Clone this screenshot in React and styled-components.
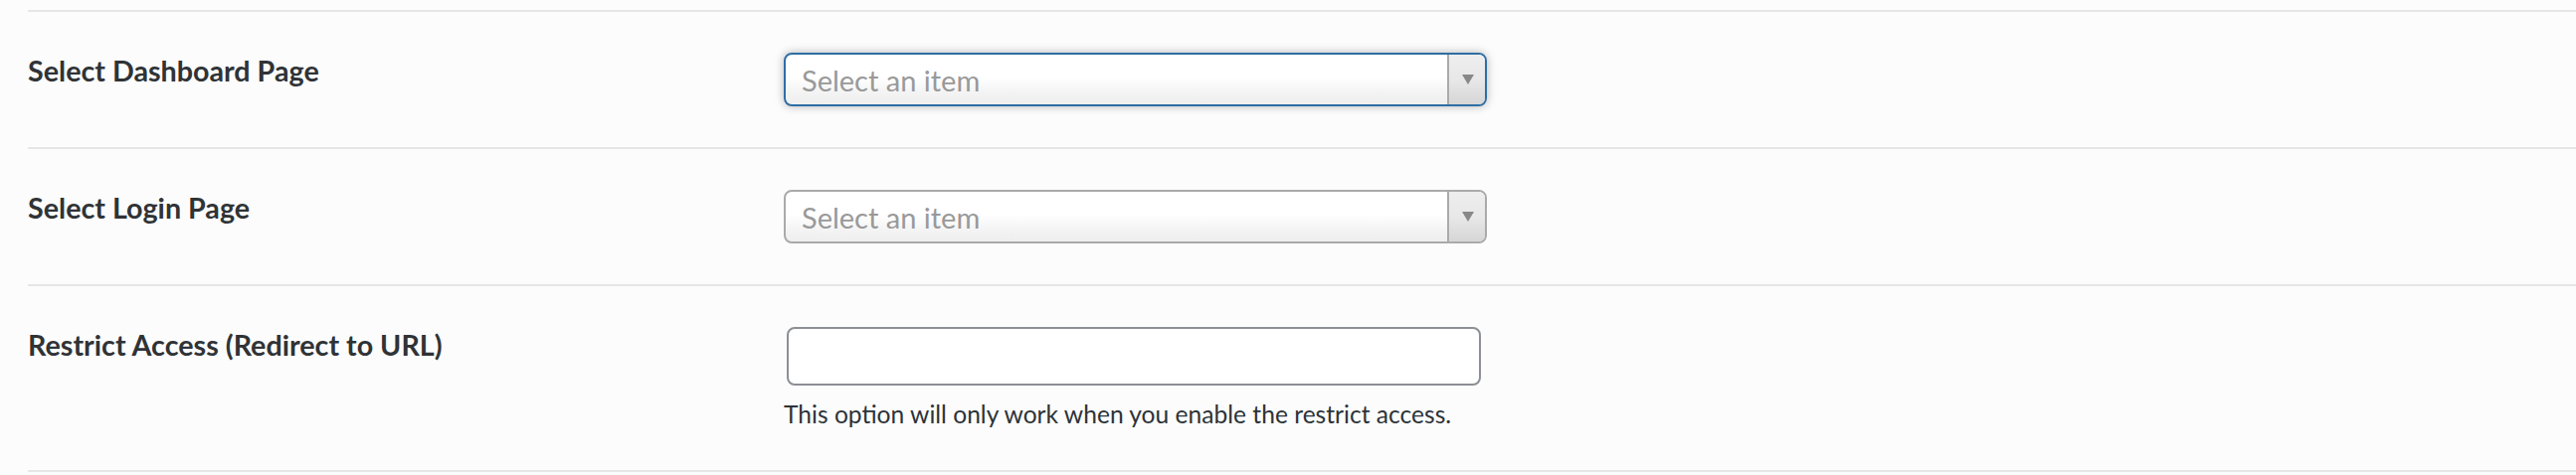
import React from "react";
import styled, { createGlobalStyle } from "styled-components";

const Global = createGlobalStyle`
  html, body { margin: 0; padding: 0; background: #fcfcfc; }
  body { font-family: "Lato", "Liberation Sans", sans-serif; }
`;

const Page = styled.div`
  padding: 10px 0 0 28px;
  background: #fcfcfc;
  min-height: 478px;
  box-sizing: border-box;
`;

const Row = styled.div`
  display: grid;
  grid-template-columns: 760px 1fr;
  border-top: 2px solid #e6e6e6;
  padding: 41px 0 ${(p) => p.$bottom || 41}px;
  &:last-child { border-bottom: 2px solid #e6e6e6; }
`;

const Label = styled.div`
  font-size: 28.7px;
  line-height: 36px;
  font-weight: 700;
  color: #303336;
`;

const Control = styled.div`
  display: flex;
  flex-direction: column;
  align-items: flex-start;
`;

const Select = styled.div`
  width: 707px;
  height: 54px;
  box-sizing: border-box;
  display: flex;
  align-items: stretch;
  border: 2px solid ${(p) => (p.$focus ? "#2f6ea5" : "#aaaaaa")};
  border-radius: 8px;
  background: linear-gradient(to bottom, #ffffff 0%, #ffffff 45%, #f4f4f4 75%, #eeeeee 100%);
  box-shadow: ${(p) => (p.$focus ? "0 0 10px rgba(0,0,0,0.28)" : "none")};
  overflow: hidden;
`;

const Placeholder = styled.span`
  flex: 1;
  display: flex;
  align-items: center;
  padding-left: 16px;
  font-size: 29px;
  color: #999999;
`;

const Arrow = styled.span`
  width: 36px;
  border-left: 2px solid #aaaaaa;
  background: linear-gradient(to bottom, #eeeeee 0%, #e8e8e8 50%, #d6d6d6 100%);
  display: flex;
  align-items: center;
  justify-content: center;
`;

const Triangle = styled.span`
  width: 0;
  height: 0;
  border-left: 6px solid transparent;
  border-right: 6px solid transparent;
  border-top: 10px solid #888888;
  margin-left: 1px;
`;

const Input = styled.input`
  width: 698px;
  height: 59px;
  box-sizing: border-box;
  margin: 0 0 0 3px;
  border: 2px solid #8c8f94;
  border-radius: 8px;
  background: #ffffff;
  font-size: 28px;
  font-family: inherit;
  outline: none;
`;

const Help = styled.p`
  margin: 13px 0 0;
  font-size: 24.6px;
  line-height: 32px;
  color: #2c3338;
`;

function FakeSelect({ focus }) {
  return (
    <Select $focus={focus}>
      <Placeholder>Select an item</Placeholder>
      <Arrow>
        <Triangle />
      </Arrow>
    </Select>
  );
}

export default function App() {
  return (
    <>
      <Global />
      <Page>
        <Row>
          <Label>Select Dashboard Page</Label>
          <Control>
            <FakeSelect focus />
          </Control>
        </Row>
        <Row>
          <Label>Select Login Page</Label>
          <Control>
            <FakeSelect />
          </Control>
        </Row>
        <Row $bottom={40}>
          <Label>Restrict Access (Redirect to URL)</Label>
          <Control>
            <Input type="text" />
            <Help>This option will only work when you enable the restrict access.</Help>
          </Control>
        </Row>
      </Page>
    </>
  );
}
